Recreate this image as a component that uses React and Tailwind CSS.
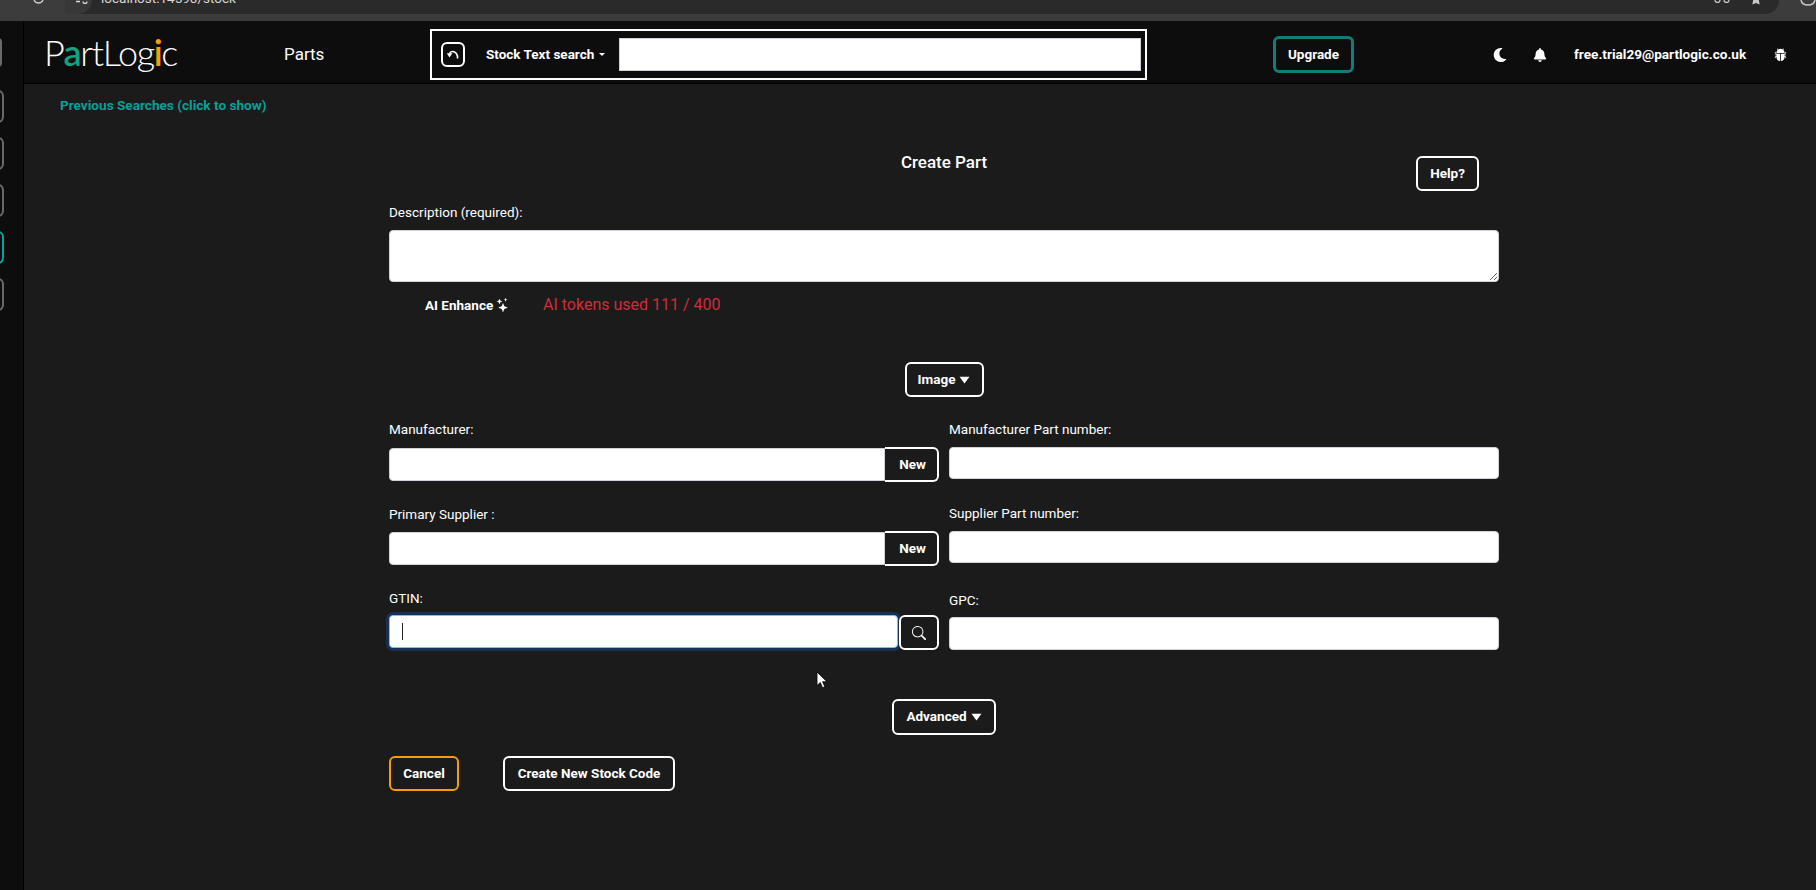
import React from "react";
import { FaBell, FaMoon } from "react-icons/fa";
import { BsBugFill, BsSearch, BsStars } from "react-icons/bs";

const UI_FONT = "font-['Roboto','Liberation_Sans',sans-serif]";

function Caret() {
  return (
    <svg width="11" height="8" viewBox="0 0 11 8" className="ml-1 inline-block">
      <path d="M0.5 0.8h10L5.5 7.4z" fill="#fff" />
    </svg>
  );
}

function OutlineButton({ children, className = "", border = "border-white" }) {
  return (
    <button
      className={`flex h-[35px] items-center justify-center rounded-md border-2 bg-[#1b1b1b] text-[13.5px] font-bold text-white ${border} ${className}`}
    >
      {children}
    </button>
  );
}

function TextInput({ className = "" }) {
  return (
    <div className={`rounded-[4px] border border-[#ced4da] bg-white ${className}`} />
  );
}

function NewGroup() {
  return (
    <div className="flex h-[35px] items-center">
      <TextInput className="h-[33px] flex-1 rounded-r-none" />
      <button className="h-[35px] w-[54px] rounded-r-md border-2 border-l-0 border-white bg-[#1b1b1b] pl-[3px] text-[13.5px] font-bold text-white">
        New
      </button>
    </div>
  );
}

export default function App() {
  return (
    <div className={`relative flex h-[890px] w-[1816px] flex-col overflow-hidden bg-[#1b1b1b] text-white ${UI_FONT}`}>
      {/* browser chrome, cut off by the capture */}
      <div className="flex h-[21px] shrink-0 items-start bg-[#3c3c3c]">
        <svg width="65" height="4" viewBox="0 0 65 4" className="shrink-0">
          <path d="M34 0c1 2.4 2.8 3 4.5 3s3.500-.6 4.500-3" fill="none" stroke="#c8c8c8" strokeWidth="1.4" />
        </svg>
        <div className="flex h-[14px] w-[1714px] shrink-0 items-start overflow-hidden rounded-br-[14px] bg-[#2a2a2a]">
          <div className="h-[14px] w-[27px] shrink-0 rounded-br-[14px] bg-[#383838] pl-[11px]">
            <svg width="12" height="4" viewBox="0 0 12 4">
              <path d="M0 1.500h4M7 1.500a2 2 0 0 0 4 0" fill="none" stroke="#d8d8d8" strokeWidth="1.3" />
            </svg>
          </div>
          <span className="ml-[9px] -mt-[11px] text-[13.5px] leading-[18px] text-[#d8d8d8]">
            localhost:14590/stock
          </span>
          <svg width="18" height="3" viewBox="0 0 18 3" className="ml-auto">
            <path d="M1 0a2.500 2.500 0 0 0 5 0M10 0a2.500 2.500 0 0 0 5 0" fill="none" stroke="#c8c8c8" strokeWidth="1.3" />
          </svg>
          <svg width="10" height="5" viewBox="0 0 10 5" className="ml-[19px] mr-[18px]">
            <path d="M2.200 0L1.300 4.600 5 2.900l3.700 1.700L7.800 0z" fill="#c8c8c8" />
          </svg>
        </div>
        <svg width="16" height="6" viewBox="0 0 16 6" className="ml-[21px] shrink-0">
          <path d="M1 0c.6 3 3.400 5 7 5s6.400-2 7-5" fill="none" stroke="#c8c8c8" strokeWidth="1.5" />
        </svg>
      </div>

      <div className="flex flex-1">
        <aside className="flex w-6 shrink-0 flex-col overflow-hidden border-r border-black bg-[#0d0d0d] pt-[17px]">
          <div className="-ml-10 mb-[23px] h-[29px] w-[41.5px] shrink-0 rounded-sm border-2 border-[#6a6a6a]" />
          <div className="flex flex-col items-end gap-[14px] pr-[19px]">
            <div className="h-[33px] w-10 shrink-0 rounded-md border-2 border-[#6a6a6a]" />
            <div className="h-[33px] w-10 shrink-0 rounded-md border-2 border-[#6a6a6a]" />
            <div className="h-[33px] w-10 shrink-0 rounded-md border-2 border-[#6a6a6a]" />
            <div className="h-[33px] w-10 shrink-0 rounded-md border-2 border-[#00a79d]" />
            <div className="h-[33px] w-10 shrink-0 rounded-md border-2 border-[#6a6a6a]" />
          </div>
        </aside>

        <div className="flex flex-1 flex-col">
          <nav className="flex h-[63px] shrink-0 items-center border-b border-black bg-[#0d0d0d] pl-5 pt-[5px]">
            <div className="w-[240px] font-['Lato',sans-serif] text-[36px] font-light leading-none tracking-[-1.3px] -mt-[5px]">
              P<span className="font-semibold text-[#10a37f]">a</span>rtLog
              <span className="font-semibold text-[#f59e0b]">i</span>c
            </div>
            <a className="w-[146px] text-[17px] text-white">Parts</a>

            <div className="flex h-[51px] w-[717px] items-center border-2 border-white pl-[9px] pr-[4px]">
              <button className="flex h-[25px] w-[24px] items-center justify-center rounded-md border-2 border-white">
                <svg width="14" height="12" viewBox="0 0 14 12">
                  <path d="M11.500 9.500C12 5.500 9.500 2.500 6.500 2.500 5 2.500 4 3.200 3.500 4.500" fill="none" stroke="#fff" strokeWidth="1.6" />
                  <path d="M0.800 4.200h5.600L3.500 8.500z" fill="#fff" />
                </svg>
              </button>
              <span className="ml-[21px] flex w-[133px] items-center text-[13.5px] font-bold">
                Stock Text search
                <span className="ml-[5px] border-x-[3px] border-t-[3px] border-x-transparent border-t-white" />
              </span>
              <div className="h-[33px] flex-1 border border-[#ced4da] bg-white" />
            </div>

            <button className="ml-[126px] h-[37px] w-[81px] rounded-md border-[3px] border-[#0f7d78] text-[13.5px] font-bold">
              Upgrade
            </button>
            <FaMoon size={14} className="ml-[139px]" />
            <FaBell size={14} className="ml-[26px]" />
            <span className="ml-[27px] w-[172px] text-[13.6px] font-bold">free.trial29@partlogic.co.uk</span>
            <BsBugFill size={13} className="ml-[28px]" />
          </nav>

          <main className="flex-1 pt-[14px]">
            <a className="ml-[36px] block text-[13.6px] font-bold leading-[15px] text-[#0b9f98]">
              Previous Searches (click to show)
            </a>

            <form className="ml-[365px] mt-[40px] w-[1110px]">
              <div className="grid h-[38px] grid-cols-[1fr_auto_1fr] items-start">
                <div />
                <h2 className="text-[17px] font-medium leading-[19px]">Create Part</h2>
                <div className="flex justify-end pr-[20px]">
                  <OutlineButton className="mt-[3px] w-[63px]">Help?</OutlineButton>
                </div>
              </div>

              <label className="mt-[13px] block text-[13.5px] leading-[17px]">Description (required):</label>
              <textarea className="mt-[9px] block h-[52px] w-full resize-y rounded-[4px] border border-[#ced4da] bg-white outline-none" />

              <div className="mt-[14px] flex h-[18px] items-center">
                <button className="ml-[36px] flex w-[118px] items-center text-[13.5px] font-bold">
                  AI Enhance
                  <BsStars size={14} className="ml-[3px]" />
                </button>
                <span className="text-[16px] text-[#d12c38]">AI tokens used 111 / 400</span>
              </div>

              <div className="mt-[48px] flex justify-center">
                <OutlineButton className="w-[79px]">
                  Image
                  <Caret />
                </OutlineButton>
              </div>

              <div className="mt-6 grid grid-cols-2 gap-x-[10px] gap-y-6">
                <div>
                  <label className="mb-[9px] block text-[13.5px] leading-[17px]">Manufacturer:</label>
                  <NewGroup />
                </div>
                <div>
                  <label className="mb-[10px] block text-[13.5px] leading-4">Manufacturer Part number:</label>
                  <TextInput className="h-[32px]" />
                </div>

                <div>
                  <label className="mb-2 block text-[13.5px] leading-[17px]">Primary Supplier :</label>
                  <NewGroup />
                </div>
                <div>
                  <label className="mb-[10px] block text-[13.5px] leading-[15px]">Supplier Part number:</label>
                  <TextInput className="h-[32px]" />
                </div>

                <div>
                  <label className="mb-2 block text-[13.5px] leading-[17px]">GTIN:</label>
                  <div className="flex h-[35px] items-start">
                    <div className="flex h-[33px] w-[509px] items-center rounded-[4px] border border-[#86b7fe] bg-white pl-3 shadow-[0_0_0_3px_rgba(13,110,253,0.25)]">
                      <span className="h-[17px] w-px bg-[#222]" />
                    </div>
                    <button className="ml-px flex h-[35px] w-[40px] items-center justify-center rounded-md border-2 border-white bg-[#1b1b1b]">
                      <BsSearch size={14} />
                    </button>
                  </div>
                </div>
                <div className="pt-[2px]">
                  <label className="mb-2 block text-[13.5px] leading-[17px]">GPC:</label>
                  <TextInput className="h-[33px]" />
                </div>
              </div>

              <div className="mt-[49px] flex justify-center">
                <OutlineButton className="h-[36px] w-[104px] pb-px">
                  Advanced
                  <Caret />
                </OutlineButton>
              </div>

              <div className="mt-[21px] flex gap-[44px]">
                <OutlineButton className="w-[70px]" border="border-[#f59e0b]">Cancel</OutlineButton>
                <OutlineButton className="w-[172px]">Create New Stock Code</OutlineButton>
              </div>
            </form>
          </main>
        </div>
      </div>

      {/* mouse pointer caught in the capture */}
      <svg width="12" height="18" viewBox="0 0 12 18" className="absolute left-[816px] top-[671px]">
        <path d="M1 1v13.500l3.300-3 2.200 5.200 2.300-1-2.200-5h4.400z" fill="#fff" stroke="#000" strokeWidth="0.8" />
      </svg>
    </div>
  );
}
